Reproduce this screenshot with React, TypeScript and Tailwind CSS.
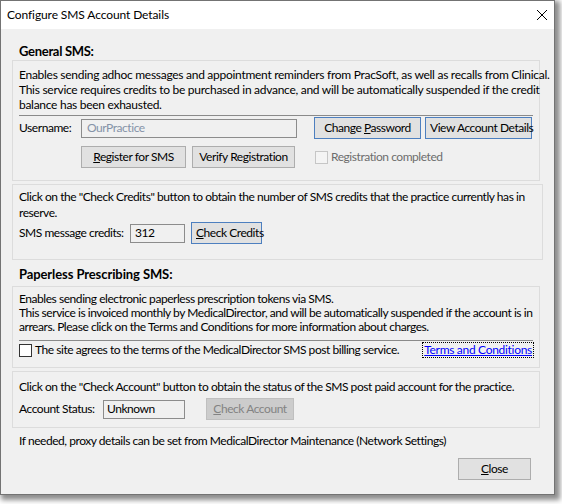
import React from "react";

// Classic Win32 style dialog for SMS account settings
const Btn = ({
  children,
  className = "",
  focus = false,
  disabled = false,
}: {
  children: React.ReactNode;
  className?: string;
  focus?: boolean;
  disabled?: boolean;
}) => (
  <button
    className={`h-[22px] px-[4px] text-[12px] leading-none whitespace-nowrap border ${
      disabled
        ? "bg-[#cccccc] border-[#bfbfbf] text-[#838383]"
        : focus
        ? "bg-[#e1e1e1] border-[#4d7fbf] text-black"
        : "bg-[#e1e1e1] border-[#adadad] text-black"
    } ${className}`}
  >
    {children}
  </button>
);

const GroupBox = ({ children, className = "" }: { children: React.ReactNode; className?: string }) => (
  <div className={`border border-[#dcdcdc] px-[6px] ${className}`}>{children}</div>
);

const App = () => {
  return (
    <div className="w-[562px] h-[504px] bg-white font-['Lato',sans-serif] text-[12px] tracking-[-0.45px] text-black">
      <div className="w-[555px] h-[495px] border border-[#737373] bg-[#f0f0f0] flex flex-col shadow-[3px_3px_5px_2px_rgba(0,0,0,0.45)]">
        {/* Title bar */}
        <div className="h-[28px] bg-white flex items-center justify-between pl-[6px] pr-[6px] shrink-0">
          <span className="text-[12px] tracking-[-0.1px]">Configure SMS Account Details</span>
          <svg width="12" height="12" viewBox="0 0 12 12">
            <path d="M1 1 L11 11 M11 1 L1 11" stroke="#000" strokeWidth="1" fill="none" />
          </svg>
        </div>

        <div className="flex flex-col px-[11px] pr-[14px] whitespace-nowrap">
          {/* General SMS */}
          <div className="mt-[14px] pl-[7px] font-bold text-[13px] tracking-[-0.3px] leading-[16px]">General SMS:</div>
          <GroupBox className="mt-[1px] pt-[6px] pb-[12px]">
            <p className="leading-[15px] tracking-[-0.28px]">
              Enables sending adhoc messages and appointment reminders from PracSoft, as well as recalls from Clinical.
              <br />
              This service requires credits to be purchased in advance, and will be automatically suspended if the credit
              <br />
              balance has been exhausted.
            </p>
            <div className="mt-[3px] h-px bg-[#8a8a8a]" />
            <div className="mt-[1px] flex items-center">
              <span className="w-[62px]">Username:</span>
              <div className="w-[216px] h-[19px] border border-[#8c8c8c] bg-[#f0f0f0] text-[#8593a8] flex items-center px-[5px]">
                OurPractice
              </div>
              <Btn focus className="ml-[17px] w-[107px]">
                Change <u>P</u>assword
              </Btn>
              <Btn focus className="ml-[4px] w-[107px] px-[2px]">
                View Account Details
              </Btn>
            </div>
            <div className="mt-[7px] flex items-center">
              <Btn className="ml-[62px] w-[105px]">
                <u>R</u>egister for SMS
              </Btn>
              <Btn className="ml-[6px] w-[103px]">Verify Registration</Btn>
              <span className="ml-[20px] w-[13px] h-[13px] border border-[#c6c6c6] bg-[#f4f4f4]" />
              <span className="ml-[3px] text-[#6d6d6d]">Registration completed</span>
            </div>
          </GroupBox>

          {/* Credits */}
          <GroupBox className="mt-[3px] pt-[4px] pb-[15px] mr-[-3px]">
            <p className="leading-[16px]">
              Click on the "Check Credits" button to obtain the number of SMS credits that the practice currently has in
              <br />
              reserve.
            </p>
            <div className="mt-[1px] flex items-center">
              <span className="w-[111px]">SMS message credits:</span>
              <div className="w-[55px] h-[19px] border border-[#8c8c8c] flex items-center px-[4px]">312</div>
              <Btn focus className="ml-[6px] w-[71px] px-[2px]">
                <u>C</u>heck Credits
              </Btn>
            </div>
          </GroupBox>

          {/* Paperless prescribing */}
          <div className="mt-[6px] pl-[7px] font-bold text-[13px] tracking-[-0.1px] leading-[16px]">
            Paperless Prescribing SMS:
          </div>
          <GroupBox className="mt-[4px] pt-[5px] pb-[8px]">
            <p className="leading-[14px]">
              Enables sending electronic paperless prescription tokens via SMS.
              <br />
              This service is invoiced monthly by MedicalDirector, and will be automatically suspended if the account is in
              <br />
              arrears. Please click on the Terms and Conditions for more information about charges.
            </p>
            <div className="mt-[6px] h-px bg-[#8a8a8a]" />
            <div className="flex items-center">
              <span className="w-[13px] h-[13px] border border-[#333] bg-white" />
              <span className="ml-[3px]">The site agrees to the terms of the MedicalDirector SMS post billing service.</span>
              <span className="ml-auto mr-[-1px] border border-dotted border-black px-px text-[#0000ff] underline leading-[14px] tracking-[-0.3px]">
                Terms and Conditions
              </span>
            </div>
          </GroupBox>

          {/* Check account */}
          <GroupBox className="mt-[3px] pt-[7px] pb-[7px]">
            <p className="leading-[16px]">
              Click on the "Check Account" button to obtain the status of the SMS post paid account for the practice.
            </p>
            <div className="mt-[3px] flex items-center">
              <span className="w-[84px]">Account Status:</span>
              <div className="w-[82px] h-[19px] border border-[#8c8c8c] flex items-center px-[3px]">Unknown</div>
              <Btn disabled className="ml-[21px] w-[88px]">
                <u>C</u>heck Account
              </Btn>
            </div>
          </GroupBox>

          <div className="mt-[5px] pl-[7px] leading-[16px]">
            If needed, proxy details can be set from MedicalDirector Maintenance (Network Settings)
          </div>

          <div className="mt-[9px] flex justify-end pr-[9px]">
            <Btn className="w-[73px] h-[21px]">
              <u>C</u>lose
            </Btn>
          </div>
        </div>
      </div>
    </div>
  );
};

export default App;
